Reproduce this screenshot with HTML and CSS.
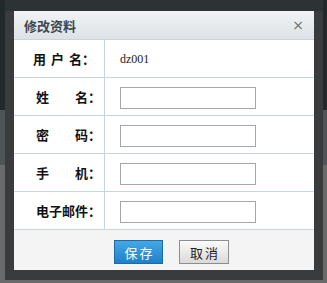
FILE: index.html
```html
<!DOCTYPE html>
<html lang="zh-CN">
<head>
    <meta charset="UTF-8">
    <title>修改资料</title>
    <link rel="stylesheet" href="styles.css">
</head>
<body>
    <div class="dialog-frame">
        <div class="dialog">
            <div class="dialog-header">
                <h1>修改资料</h1>
                <span class="dialog-close">×</span>
            </div>

            <form class="dialog-form">
                <div class="form-row">
                    <label class="form-label label-user">用 户 名：</label>
                    <div class="form-value">dz001</div>
                </div>
                <div class="form-row">
                    <label class="form-label" for="realname">姓　　名：</label>
                    <div class="form-value"><input type="text" id="realname"></div>
                </div>
                <div class="form-row">
                    <label class="form-label" for="password">密　　码：</label>
                    <div class="form-value"><input type="password" id="password"></div>
                </div>
                <div class="form-row">
                    <label class="form-label" for="mobile">手　　机：</label>
                    <div class="form-value"><input type="text" id="mobile"></div>
                </div>
                <div class="form-row">
                    <label class="form-label" for="email">电子邮件：</label>
                    <div class="form-value"><input type="text" id="email"></div>
                </div>

                <div class="dialog-footer">
                    <button type="button" class="btn btn-primary">保存</button>
                    <button type="button" class="btn btn-default">取消</button>
                </div>
            </form>
        </div>
    </div>
</body>
</html>
```

FILE: styles.css
```css
:root {
    --frame: #3a3b3c;
    --line: #c6d6de;
    --text: #111111;
    --input-border: #a7a7a7;
}

* {
    margin: 0;
    padding: 0;
    box-sizing: border-box;
}

body {
    height: 283px;
    overflow: hidden;
    font-family: "Noto Sans CJK SC", "Liberation Sans", sans-serif;
    background: linear-gradient(to bottom, #23282b 0, #23282b 110px, #4f5456 110px, #4f5456 165px, #6a6a6a 165px);
}

.dialog-frame {
    width: 318px;
    height: 280px;
    margin-left: 5px;
    padding: 11px 9px 10px;
    background: linear-gradient(to bottom, #2d3235 0, #2d3235 11px, var(--frame) 11px);
}

.dialog {
    width: 300px;
    height: 259px;
    background-color: #ffffff;
    display: flex;
    flex-direction: column;
}

.dialog-header {
    height: 29px;
    display: flex;
    align-items: center;
    justify-content: space-between;
    padding: 0 10px 0 10px;
    background: linear-gradient(to bottom, #f1f3f5, #dde2e6);
    border-bottom: 1px solid #cbd3d9;
}

.dialog-header h1 {
    font-size: 13px;
    font-weight: 700;
    color: #3c4650;
}

.dialog-close {
    font-family: "DejaVu Sans", sans-serif;
    font-size: 14px;
    color: #6a6f73;
    line-height: 1;
    margin-top: -1px;
}

.dialog-form {
    flex: 1;
    display: flex;
    flex-direction: column;
}

.form-row {
    display: grid;
    grid-template-columns: 91px 1fr;
    height: 38px;
    border-bottom: 1px solid var(--line);
}

.form-row:last-of-type {
    height: 36px;
}

.form-label {
    display: flex;
    align-items: center;
    justify-content: flex-end;
    padding-right: 3px;
    border-right: 1px solid var(--line);
    font-size: 13px;
    font-weight: 700;
    color: var(--text);
    white-space: pre;
}

.label-user {
    padding-right: 9px;
    word-spacing: 2px;
}

.form-value {
    display: flex;
    align-items: center;
    padding-left: 15px;
    padding-top: 2px;
    font-family: "Liberation Serif", serif;
    font-size: 12px;
    color: #222222;
}

.form-value input {
    width: 136px;
    height: 22px;
    border: 1px solid var(--input-border);
    background-color: #ffffff;
}

.dialog-footer {
    flex: 1;
    display: flex;
    align-items: flex-start;
    gap: 16px;
    padding: 10px 0 0 100px;
    background-color: #f4f4f4;
}

.btn {
    height: 24px;
    font-family: "Noto Sans CJK SC", sans-serif;
    font-size: 13px;
    letter-spacing: 2px;
    padding-left: 2px;
    cursor: pointer;
}

.btn-primary {
    width: 49px;
    color: #ffffff;
    background: linear-gradient(to bottom, #45a8e6, #1f80c9);
    border: 1px solid #1c6aa6;
}

.btn-default {
    width: 50px;
    color: #222222;
    background: linear-gradient(to bottom, #fbfbfb, #dadada);
    border: 1px solid #8e8e8e;
}
```
